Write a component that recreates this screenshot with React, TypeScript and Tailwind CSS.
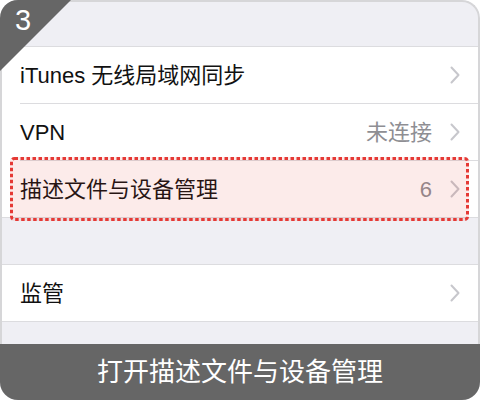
import React from 'react';

const FONT = '"Liberation Sans", "Noto Sans CJK SC", sans-serif';

function Chevron() {
  return (
    <svg width="10" height="18" viewBox="0 0 10 18" className="shrink-0">
      <polyline points="1.5,1.5 8.5,9 1.5,16.5" fill="none" stroke="#c7c7cc" strokeWidth="2" strokeLinecap="round" strokeLinejoin="round" />
    </svg>
  );
}

function Row({ label, value, last, children }: { label: string; value?: string; last?: boolean; children?: React.ReactNode }) {
  return (
    <div className={`relative flex bg-white pl-[18px] ${last ? 'h-[56px]' : 'h-[57px]'}`}>
      <div className={`flex flex-1 items-center pr-[18px] ${last ? '' : 'border-b border-[#dcdcdf]'}`}>
        <span className="flex-1 text-[22px] text-[#111]">{label}</span>
        {value && <span className="mr-[18px] text-[22px] text-[#8e8e93]">{value}</span>}
        <Chevron />
      </div>
      {children}
    </div>
  );
}

export default function App() {
  return (
    <div className="relative h-[400px] w-[480px] overflow-hidden rounded-[18px] bg-[#efeff4]" style={{ fontFamily: FONT }}>
      <div className="flex h-[344px] flex-col rounded-t-[18px] border-x-2 border-t-2 border-[#d6d6d8]">
        {/* top gap */}
        <div className="h-[44px]" />

        {/* first group */}
        <div className="border-y border-[#dcdcdf]">
          <Row label="iTunes 无线局域网同步" />
          <Row label="VPN" value="未连接" />
          <Row label="描述文件与设备管理" value="6" last>
            <div className="pointer-events-none absolute -top-[4px] left-[8px] h-[64px] w-[459px] rounded-[4px] bg-[#e53935]/10">
              <svg width="459" height="64" className="absolute inset-0">
                <rect x="1.5" y="1.5" width="456" height="61" rx="3" fill="none" stroke="#e53935" strokeWidth="3" strokeDasharray="3.5 2.5" />
              </svg>
            </div>
          </Row>
        </div>

        <div className="h-[46px]" />

        {/* second group */}
        <div className="border-y border-[#dcdcdf]">
          <Row label="监管" last />
        </div>
      </div>

      {/* bottom caption */}
      <div className="flex h-[56px] items-center justify-center bg-[#666666]">
        <span className="text-[26px] text-white">打开描述文件与设备管理</span>
      </div>

      {/* step badge */}
      <svg width="72" height="72" className="absolute left-0 top-0">
        <polygon points="0,0 71,0 0,71" fill="#666666" />
      </svg>
      <span className="absolute left-[15px] top-[2px] text-[29px] leading-[36px] text-white">3</span>
    </div>
  );
}
